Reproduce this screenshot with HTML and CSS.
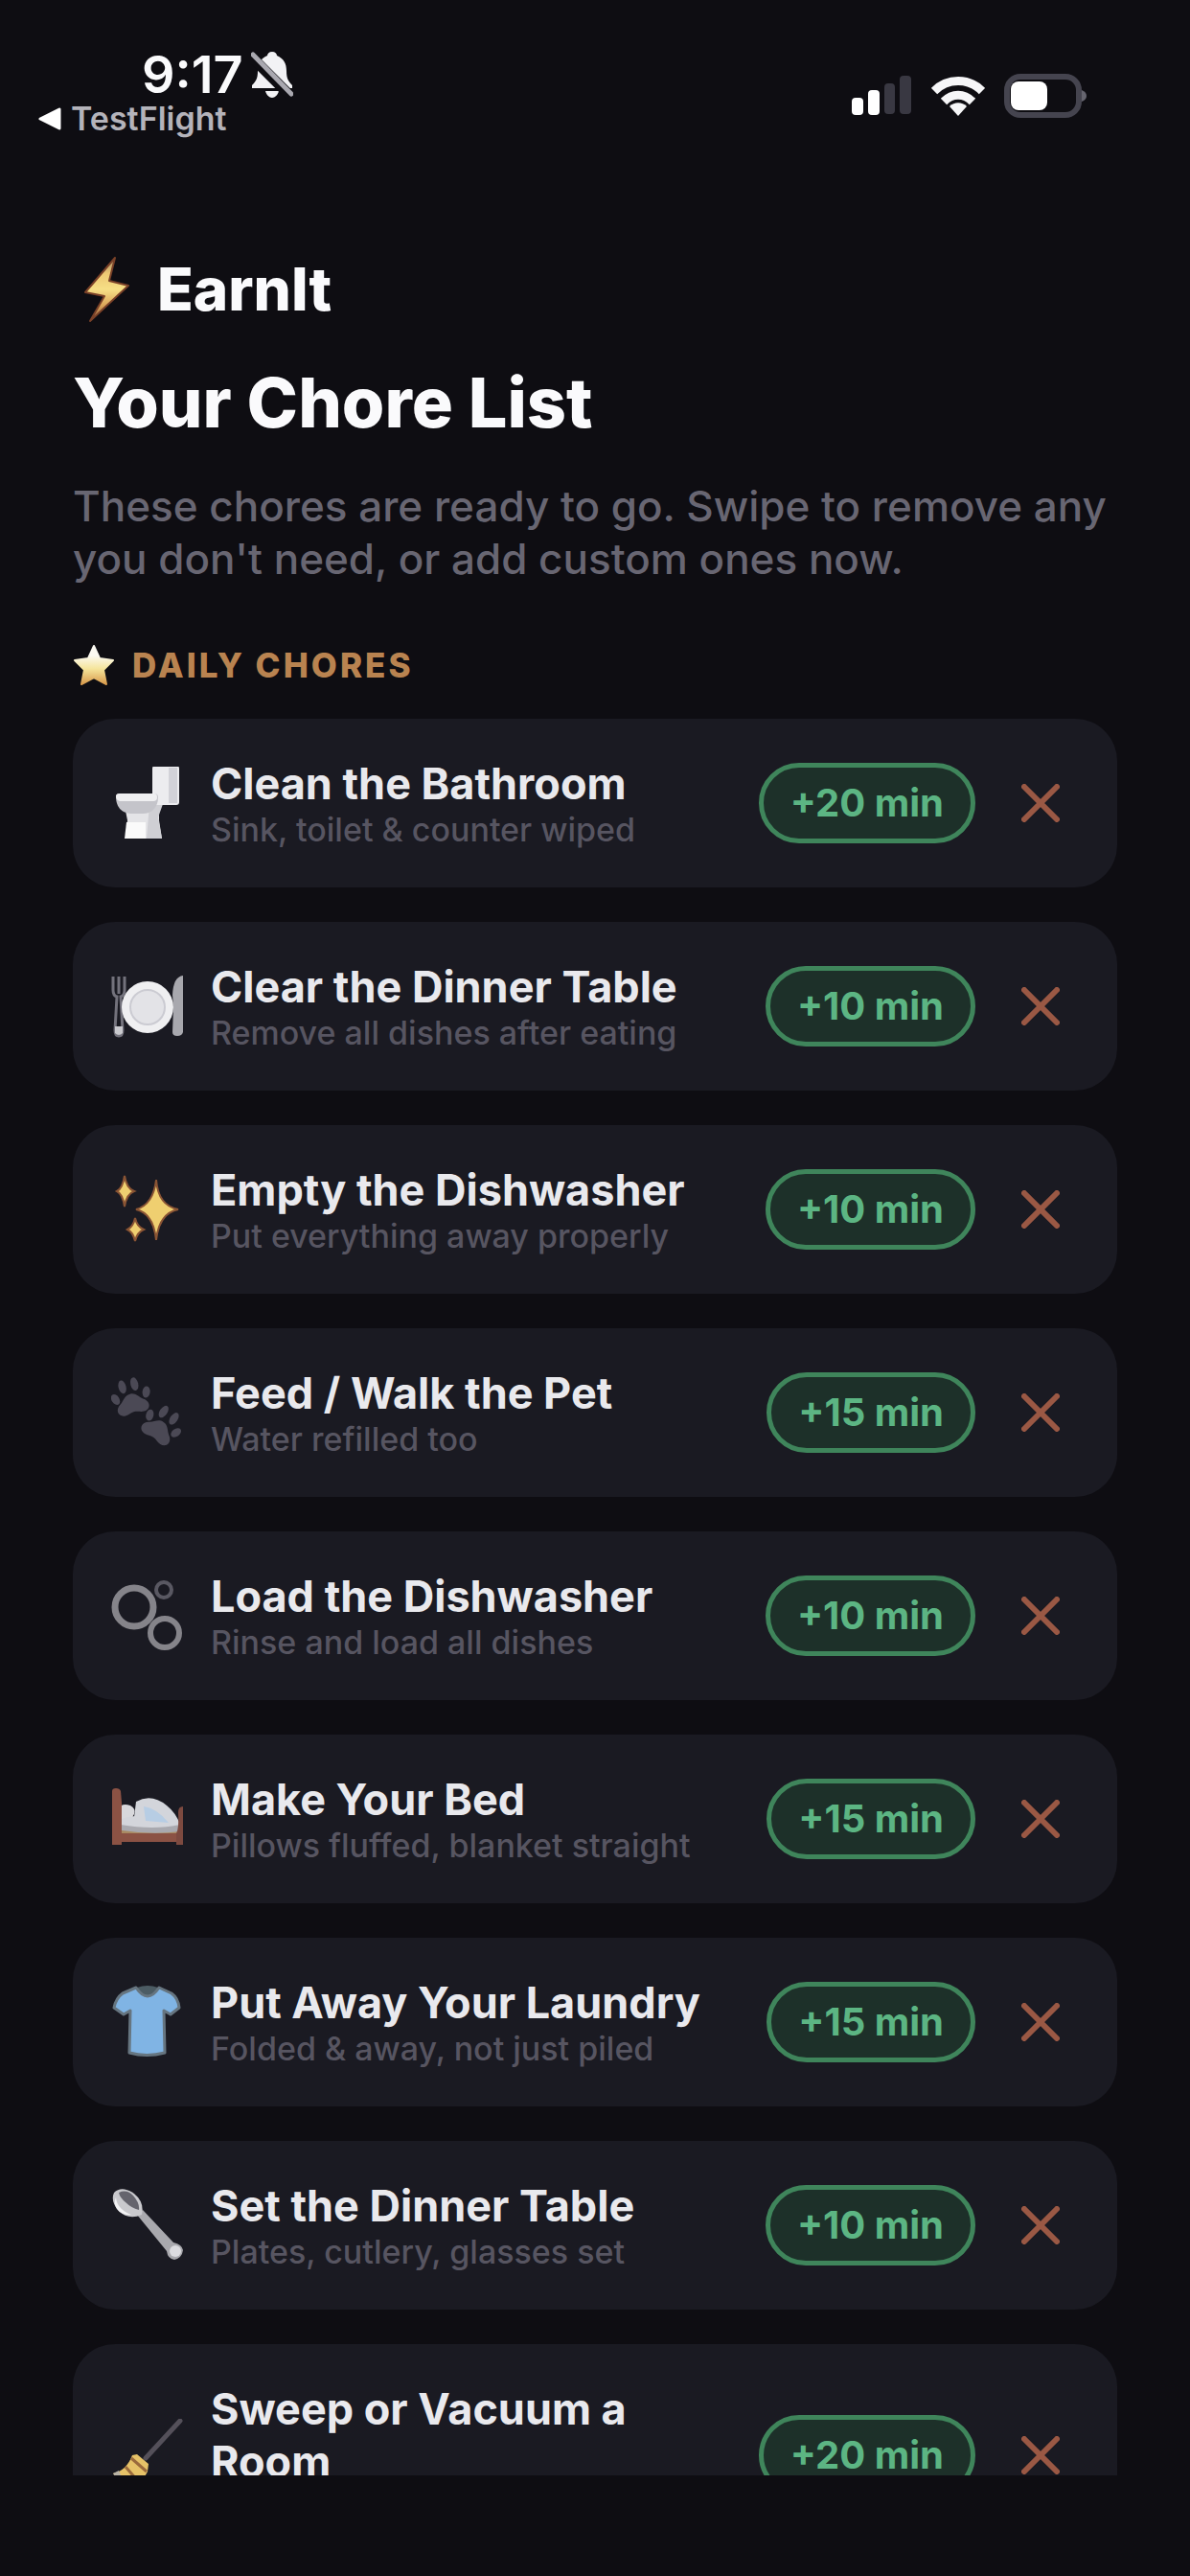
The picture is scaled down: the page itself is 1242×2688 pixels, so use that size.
FILE: index.html
```html
<!DOCTYPE html>
<html lang="en">
<head>
<meta charset="utf-8">
<meta name="viewport" content="width=device-width, initial-scale=1">
<title>EarnIt – Your Chore List</title>
<link rel="stylesheet" href="styles.css">
</head>
<body>
<div class="app">
  <header class="status">
    <div class="status-left">
      <div class="clock">
        <span>9:17</span>
        <svg class="bell" viewBox="0 0 44 50" aria-hidden="true">
          <path d="M22 1c-3 0-5 2-5 4C10 8 7 13 7 21c0 8-2 11-6 15v3h42v-3c-4-4-6-7-6-15 0-8-3-13-10-16 0-2-2-4-5-4zM15 42c1 4 4 7 7 7s6-3 7-7z" fill="#f2f2f5"/>
          <path d="M-1 5 43 49" stroke="#0e0d12" stroke-width="11"/>
          <path d="M2 4 42 45" stroke="#a9a8b0" stroke-width="5" stroke-linecap="round"/>
        </svg>
      </div>
      <a class="back" href="#">
        <svg class="back-arrow" viewBox="0 0 24 24" aria-hidden="true"><path d="M2 12 22 2v20z" fill="#fff" stroke="#fff" stroke-width="3" stroke-linejoin="round"/></svg>
        <span>TestFlight</span>
      </a>
    </div>
    <div class="status-right">
      <svg class="signal" viewBox="0 0 64 44" aria-hidden="true">
        <rect x="1" y="24" width="12" height="18" rx="4" fill="#fff"/>
        <rect x="18" y="16" width="12" height="26" rx="4" fill="#fff"/>
        <rect x="35" y="9" width="11" height="32" rx="4" fill="#393842"/>
        <rect x="51" y="1" width="12" height="40" rx="4" fill="#393842"/>
      </svg>
      <svg class="wifi" viewBox="0 0 56 44" aria-hidden="true">
        <g fill="none" stroke="#f6f6f8" stroke-width="9">
          <path d="M3 17C17 3 39 3 53 17"/>
          <path d="M13 28C22 19 34 19 43 28"/>
        </g>
        <path d="M28 43 19 33C24 28 32 28 37 33z" fill="#f6f6f8"/>
      </svg>
      <svg class="battery" viewBox="0 0 88 46" aria-hidden="true">
        <rect x="3" y="3" width="75" height="40" rx="14" fill="none" stroke="#45444f" stroke-width="6"/>
        <rect x="7" y="8" width="38" height="30" rx="8" fill="#fff"/>
        <path d="M81 17q5 2 5 6t-5 6z" fill="#66656f"/>
      </svg>
    </div>
  </header>

  <main class="screen">
    <div class="brand">
      <svg class="bolt" viewBox="0 0 56 72" aria-hidden="true">
        <defs><linearGradient id="gold" x1="0" y1="0" x2="0" y2="1"><stop offset="0" stop-color="#a58a66"/><stop offset=".25" stop-color="#eec873"/><stop offset=".5" stop-color="#f6df86"/><stop offset=".75" stop-color="#dca65a"/><stop offset="1" stop-color="#8a5a3e"/></linearGradient></defs>
        <path d="M36 3 5 39l20 4L10 69 50 32l-20-5z" fill="url(#gold)" stroke="#7a4128" stroke-width="2" stroke-linejoin="round"/>
      </svg>
      <span>EarnIt</span>
    </div>
    <h1 class="title">Your Chore List</h1>
    <p class="intro">These chores are ready to go. Swipe to remove any you don't need, or add custom ones now.</p>

    <h2 class="section">
      <svg class="star" viewBox="0 0 44 44" aria-hidden="true">
        <defs><linearGradient id="starfill" x1="0" y1="0" x2="0" y2="1"><stop offset=".25" stop-color="#fbf9f2"/><stop offset=".6" stop-color="#f5e49a"/><stop offset="1" stop-color="#d89a4c"/></linearGradient></defs>
        <path d="m22 2 6 13 14 2-10 10 3 15-13-7-13 7 3-15L2 17l14-2z" fill="url(#starfill)" stroke="url(#starfill)" stroke-width="2" stroke-linejoin="round"/>
      </svg>
      <span>DAILY CHORES</span>
    </h2>

    <ul class="list">
      <li class="card">
        <svg class="icon" viewBox="0 0 76 76" aria-hidden="true">
          <path d="M14 41h36v15l3 19H15l2-19z" fill="#e4e4e7"/>
          <path d="M40 39h14l-5 14 4 22H37z" fill="#cfcfd4"/>
          <path d="M16 58h20v17H14z" fill="#fafafa"/>
          <rect x="43" y="-1" width="28" height="41" rx="3" fill="#ececef"/>
          <path d="M60 1h9v37h-9z" fill="#d2d2d8"/>
          <path d="M5 31q0-3 4-3h36q4 0 4 4 0 8-5 13-4 4-11 4H20Q5 47 5 31z" fill="#c4c4ca"/>
          <path d="M5 31q0-3 4-3h36q3 0 3 4 0 4-4 4H9q-4-1-4-5z" fill="#efeff1"/>
        </svg>
        <div class="text"><h3 class="name">Clean the Bathroom</h3><p class="note">Sink, toilet &amp; counter wiped</p></div>
        <span class="pill">+20 min</span>
        <button class="remove" type="button" aria-label="Remove Clean the Bathroom"><svg class="cross" viewBox="0 0 40 40" aria-hidden="true"><path d="M3 3 37 37M37 3 3 37"/></svg></button>
      </li>
      <li class="card">
        <svg class="icon" viewBox="0 0 76 76" aria-hidden="true">
          <path d="M2 7v14q0 6 4 7l-2 35q0 6 4 6t4-6L10 28q4-1 4-7V7M8 7v18" fill="none" stroke="#73727c" stroke-width="3"/>
          <path d="M4 59h8v7q-4 4-8 0z" fill="#c9c9ce"/>
          <path d="M75 6q-10 1-11 20l1 13-1 26q0 4 5 4t6-4z" fill="#a8a8ae"/>
          <circle cx="38" cy="39" r="27" fill="#efeff1"/>
          <circle cx="38" cy="39" r="18" fill="#e3e3e7" stroke="#cbcbd2" stroke-width="2"/>
        </svg>
        <div class="text"><h3 class="name">Clear the Dinner Table</h3><p class="note">Remove all dishes after eating</p></div>
        <span class="pill">+10 min</span>
        <button class="remove" type="button" aria-label="Remove Clear the Dinner Table"><svg class="cross" viewBox="0 0 40 40" aria-hidden="true"><path d="M3 3 37 37M37 3 3 37"/></svg></button>
      </li>
      <li class="card">
        <svg class="icon" viewBox="0 0 76 76" aria-hidden="true">
          <g fill="#efcf70" stroke="#8a5434" stroke-width="2">
            <path d="M47 7q2 27 23 31-20 4-23 32-3-28-21-32 18-5 21-31z"/>
            <path d="M14 3q2 13 10 16-8 3-10 16-2-13-8-16 6-3 8-16z"/>
            <path d="M25 47q2 9 9 12-7 3-9 12-2-9-8-12 6-3 8-12z"/>
          </g>
        </svg>
        <div class="text"><h3 class="name">Empty the Dishwasher</h3><p class="note">Put everything away properly</p></div>
        <span class="pill">+10 min</span>
        <button class="remove" type="button" aria-label="Remove Empty the Dishwasher"><svg class="cross" viewBox="0 0 40 40" aria-hidden="true"><path d="M3 3 37 37M37 3 3 37"/></svg></button>
      </li>
      <li class="card">
        <svg class="icon" viewBox="0 0 76 76" aria-hidden="true">
          <defs>
            <g id="paw" fill="#4b4955">
              <path d="M-2-6c6 0 8 5 12 8 8 5 5 13-2 13-4 0-6-2-10-2s-6 2-10 2c-7 0-10-8-2-13 4-3 6-8 12-8z"/>
              <ellipse cx="-18" cy="-4" rx="4" ry="6" transform="rotate(-20 -18 -4)"/>
              <ellipse cx="-8" cy="-15" rx="4" ry="7"/>
              <ellipse cx="5" cy="-15" rx="4" ry="7"/>
              <ellipse cx="15" cy="-4" rx="4" ry="6" transform="rotate(20 15 -4)"/>
            </g>
          </defs>
          <use href="#paw" transform="translate(23 24) rotate(-14)"/>
          <use href="#paw" transform="translate(53 54) rotate(34)"/>
        </svg>
        <div class="text"><h3 class="name">Feed / Walk the Pet</h3><p class="note">Water refilled too</p></div>
        <span class="pill">+15 min</span>
        <button class="remove" type="button" aria-label="Remove Feed / Walk the Pet"><svg class="cross" viewBox="0 0 40 40" aria-hidden="true"><path d="M3 3 37 37M37 3 3 37"/></svg></button>
      </li>
      <li class="card">
        <svg class="icon" viewBox="0 0 76 76" aria-hidden="true">
          <g fill="none" stroke="#85848a">
            <circle cx="24" cy="29" r="20" stroke-width="7"/>
            <circle cx="56" cy="56" r="15" stroke-width="6"/>
            <circle cx="55" cy="11" r="8" stroke-width="4" stroke="#595862"/>
          </g>
        </svg>
        <div class="text"><h3 class="name">Load the Dishwasher</h3><p class="note">Rinse and load all dishes</p></div>
        <span class="pill">+10 min</span>
        <button class="remove" type="button" aria-label="Remove Load the Dishwasher"><svg class="cross" viewBox="0 0 40 40" aria-hidden="true"><path d="M3 3 37 37M37 3 3 37"/></svg></button>
      </li>
      <li class="card">
        <svg class="icon" viewBox="0 0 76 76" aria-hidden="true">
          <path d="M10 46h60v16H10z" fill="#8b5244"/>
          <path d="M9 44h62v9H9z" fill="#a98a62"/>
          <path d="M8 41q0-6 6-6h50q9 4 9 16-30 4-62-1-3-4-3-9z" fill="#a9a9af"/>
          <path d="M8 28q2-7 12-4 6 3 4 9-3 7-12 6-6-3-4-11z" fill="#d8d8dc"/>
          <path d="M8 40q8-5 16-4l2-16q16-9 32 4 10 8 14 20-28 6-62 0z" fill="#d3d5db"/>
          <path d="M34 25q14 2 26 17l-24-2z" fill="#b7cde4"/>
          <path d="M1 9q0-3 4-3t5 3l1 12v44H1z" fill="#8b5244"/>
          <path d="M70 31q0-6 5-6v40h-7V53q3-5 2-22z" fill="#7d4a40"/>
        </svg>
        <div class="text"><h3 class="name">Make Your Bed</h3><p class="note">Pillows fluffed, blanket straight</p></div>
        <span class="pill">+15 min</span>
        <button class="remove" type="button" aria-label="Remove Make Your Bed"><svg class="cross" viewBox="0 0 40 40" aria-hidden="true"><path d="M3 3 37 37M37 3 3 37"/></svg></button>
      </li>
      <li class="card">
        <svg class="icon" viewBox="0 0 76 76" aria-hidden="true">
          <path d="M27 2q11-4 22 0l-3 9H30z" fill="#4c5c64"/>
          <path d="M26 2 12 8Q5 13 3 23l10 7 7-4-1 44q18 5 37 0l-1-44 7 4 9-7Q70 13 63 8L50 2q-12 18-24 0z" fill="#80b4e4" stroke="#667580" stroke-width="3" stroke-linejoin="round"/>
        </svg>
        <div class="text"><h3 class="name">Put Away Your Laundry</h3><p class="note">Folded &amp; away, not just piled</p></div>
        <span class="pill">+15 min</span>
        <button class="remove" type="button" aria-label="Remove Put Away Your Laundry"><svg class="cross" viewBox="0 0 40 40" aria-hidden="true"><path d="M3 3 37 37M37 3 3 37"/></svg></button>
      </li>
      <li class="card">
        <svg class="icon" viewBox="0 0 76 76" aria-hidden="true">
          <path d="m27 27 6-5 32 34q9 2 10 8-1 8-9 10-7-1-8-9z" fill="#a9a9ae"/>
          <circle cx="67" cy="65" r="6" fill="#dcdce0"/>
          <path d="M3 4Q11-4 24 5q11 9 8 22-14 6-24-4Q-1 13 3 4z" fill="#c9c9cd"/>
          <path d="M8 4q8-4 15 3 7 8 6 15-8-2-14-8-6-5-7-10z" fill="#65646d"/>
          <path d="M5 9q1 12 16 18-10 1-15-6-4-6-1-12z" fill="#f2f2f4"/>
        </svg>
        <div class="text"><h3 class="name">Set the Dinner Table</h3><p class="note">Plates, cutlery, glasses set</p></div>
        <span class="pill">+10 min</span>
        <button class="remove" type="button" aria-label="Remove Set the Dinner Table"><svg class="cross" viewBox="0 0 40 40" aria-hidden="true"><path d="M3 3 37 37M37 3 3 37"/></svg></button>
      </li>
      <li class="card">
        <svg class="icon" viewBox="0 0 76 76" aria-hidden="true">
          <path d="M72 2 36 41" stroke="#54505a" stroke-width="5" stroke-linecap="round"/>
          <path d="m27 37 12 10-1 8q-8 16-24 18L2 57q14-3 20-19z" fill="#e6c268"/>
          <path d="m21 41 16 14M15 50l13 15" stroke="#9a6a3c" stroke-width="3"/>
          <path d="m2 57 6-3 8 19h-2z" fill="#b9b3a6"/>
        </svg>
        <div class="text"><h3 class="name">Sweep or Vacuum a Room</h3><p class="note">Floor clear, corners too</p></div>
        <span class="pill">+20 min</span>
        <button class="remove" type="button" aria-label="Remove Sweep or Vacuum a Room"><svg class="cross" viewBox="0 0 40 40" aria-hidden="true"><path d="M3 3 37 37M37 3 3 37"/></svg></button>
      </li>
    </ul>
  </main>
</div>
</body>
</html>
```

FILE: styles.css
```css
* {
  box-sizing: border-box;
}

body {
  margin: 0;
  background: #0e0d12;
  color: #fafafc;
  font-family: Inter, "Liberation Sans", sans-serif;
}

h1, h2, h3, p, ul {
  margin: 0;
  padding: 0;
}

svg {
  display: block;
  flex: none;
}

.app {
  display: flex;
  flex-direction: column;
  height: 100vh;
  padding-bottom: 105px;
}

/* Status bar */
.status {
  display: flex;
  justify-content: space-between;
  align-items: center;
  padding: 50px 106px 0 40px;
}

.clock {
  display: flex;
  align-items: center;
  gap: 8px;
  padding-left: 108px;
  font-size: 54px;
  font-weight: 600;
  line-height: 56px;
}

.bell {
  width: 44px;
  height: 50px;
}

.back {
  display: flex;
  align-items: center;
  gap: 10px;
  color: #b4b3ba;
  font-size: 34px;
  font-weight: 600;
  line-height: 36px;
  text-decoration: none;
}

.back-arrow {
  width: 24px;
  height: 24px;
}

.status-right {
  display: flex;
  align-items: center;
  gap: 20px;
  padding-top: 8px;
}

.signal {
  width: 64px;
  height: 44px;
}

.wifi {
  width: 56px;
  height: 44px;
}

.battery {
  width: 88px;
  height: 46px;
}

/* Page content */
.screen {
  flex: 1;
  min-height: 0;
  overflow-y: auto;
  scrollbar-width: none;
  padding: 120px 76px 0;
}

.brand {
  display: flex;
  align-items: center;
  gap: 24px;
  padding-left: 8px;
  font-size: 62px;
  font-weight: 800;
  line-height: 80px;
}

.bolt {
  width: 56px;
  height: 72px;
}

.title {
  margin-top: 34px;
  font-size: 72px;
  font-weight: 800;
  line-height: 88px;
}

.intro {
  margin-top: 37px;
  color: #686672;
  font-size: 44px;
  font-weight: 500;
  line-height: 55px;
}

.section {
  display: flex;
  align-items: center;
  gap: 18px;
  margin-top: 61px;
  color: #b98350;
  font-size: 35px;
  font-weight: 800;
  letter-spacing: 3px;
  line-height: 44px;
}

.star {
  width: 44px;
  height: 44px;
}

/* Chore cards */
.list {
  display: flex;
  flex-direction: column;
  gap: 36px;
  margin-top: 34px;
  list-style: none;
}

.card {
  display: flex;
  align-items: center;
  padding: 40px;
  border-radius: 44px;
  background: #1a1a22;
}

.icon {
  width: 76px;
  height: 76px;
  margin-right: 28px;
}

.text {
  flex: 1;
  min-width: 0;
}

.name {
  color: #e9e9ed;
  font-size: 45px;
  font-weight: 700;
  line-height: 55px;
}

.note {
  color: #575561;
  font-size: 34px;
  font-weight: 500;
  line-height: 41px;
}

.pill {
  margin-left: 16px;
  padding: 0 28px;
  border: 5px solid #3f855b;
  border-radius: 42px;
  background: #1d3029;
  color: #5cb583;
  font-size: 40px;
  font-weight: 700;
  line-height: 74px;
  white-space: nowrap;
}

.remove {
  display: flex;
  justify-content: center;
  align-items: center;
  width: 80px;
  height: 80px;
  margin-left: 28px;
  padding: 0;
  border: 0;
  background: none;
}

.cross {
  width: 40px;
  height: 40px;
  fill: none;
  stroke: #9a5844;
  stroke-width: 6;
  stroke-linecap: round;
}
```
